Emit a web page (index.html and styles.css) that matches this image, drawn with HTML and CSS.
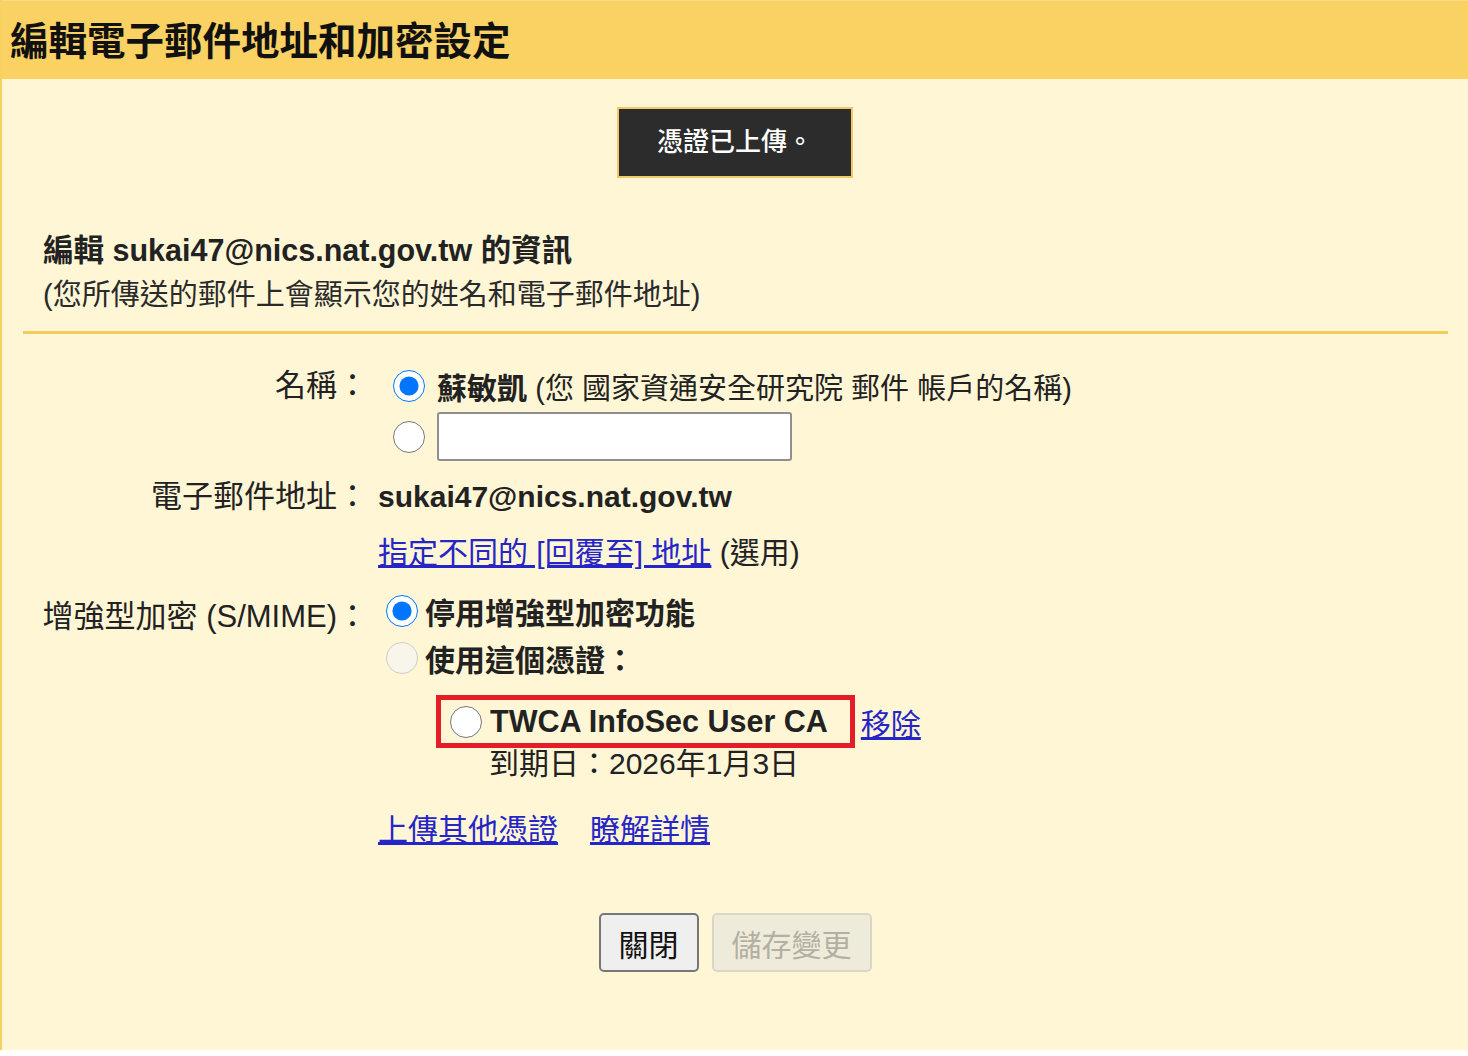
FILE: index.html
```html
<!DOCTYPE html>
<html lang="zh-Hant">
<head>
    <meta charset="UTF-8">
    <meta name="viewport" content="width=device-width, initial-scale=1.0">
    <title>編輯電子郵件地址和加密設定</title>
    <link rel="stylesheet" href="styles.css">
</head>
<body>

    <div class="dialog">
        <!-- Title bar -->
        <div class="dialog-title">編輯電子郵件地址和加密設定</div>

        <div class="dialog-body">
            <div class="toast-row">
                <div class="toast">憑證已上傳。</div>
            </div>

            <div class="intro">
                <h2>編輯 sukai47@nics.nat.gov.tw 的資訊</h2>
                <p>(您所傳送的郵件上會顯示您的姓名和電子郵件地址)</p>
            </div>

            <div class="divider"></div>

            <form class="settings">
                <!-- Name -->
                <div class="label">名稱：</div>
                <div class="value">
                    <div class="name-option">
                        <input type="radio" name="nameChoice" class="radio" checked>
                        <span><b>蘇敏凱</b> <span class="note">(您 國家資通安全研究院 郵件 帳戶的名稱)</span></span>
                    </div>
                    <div class="name-option name-custom">
                        <input type="radio" name="nameChoice" class="radio">
                        <input type="text" class="text-input">
                    </div>
                </div>

                <!-- Email address -->
                <div class="label label-email">電子郵件地址：</div>
                <div class="value">
                    <div class="email">sukai47@nics.nat.gov.tw</div>
                    <div class="reply-to"><a href="#">指定不同的 [回覆至] 地址</a> (選用)</div>
                </div>

                <!-- S/MIME -->
                <div class="label label-smime">增強型加密 (S/MIME)：</div>
                <div class="value">
                    <div class="smime-option">
                        <input type="radio" name="smime" class="radio" checked>
                        <b>停用增強型加密功能</b>
                    </div>
                    <div class="smime-option">
                        <input type="radio" name="smime" class="radio" disabled>
                        <b>使用這個憑證：</b>
                    </div>
                    <div class="cert-row">
                        <div class="cert-box">
                            <input type="radio" name="cert" class="radio">
                            <b>TWCA InfoSec User CA</b>
                        </div>
                        <a href="#" class="remove">移除</a>
                    </div>
                    <div class="expiry">到期日：2026年1月3日</div>
                    <div class="cert-links">
                        <a href="#">上傳其他憑證</a>
                        <a href="#">瞭解詳情</a>
                    </div>
                </div>
            </form>

            <div class="buttons">
                <button type="button" class="btn">關閉</button>
                <button type="button" class="btn" disabled>儲存變更</button>
            </div>
        </div>
    </div>

</body>
</html>
```

FILE: styles.css
```css
body {
    margin: 0;
    padding: 0;
    background-color: #fff;
    font-family: "Liberation Sans", "Noto Sans CJK TC", sans-serif;
    color: #222;
}
.dialog {
    height: 1050px;
    border-left: 2px solid #f9d062;
    background-color: #fff6d6;
    display: flex;
    flex-direction: column;
}
.dialog-title {
    height: 78px;
    border-top: 1px solid #f6dc8a;
    background-color: #fad264;
    font-size: 38.5px;
    font-weight: bold;
    color: #111;
    line-height: 82px;
    padding-left: 8px;
}
.toast-row {
    display: flex;
    justify-content: center;
    margin-top: 28px;
}
.toast {
    width: 232px;
    height: 67px;
    border: 2px solid #f2c76a;
    background-color: #2c2c2c;
    color: #fff;
    font-size: 26px;
    font-weight: 500;
    line-height: 67px;
    text-align: center;
}
.intro {
    padding-left: 41px;
    margin-top: 52px;
}
.intro h2 {
    margin: 0;
    font-size: 30.5px;
    line-height: 40px;
}
.intro p {
    margin: 5px 0 0;
    font-size: 29px;
    line-height: 40px;
    color: #2a2a2a;
}
.divider {
    margin: 16px 20px 0 21px;
    border-top: 3px solid #f6ca5c;
}
.settings {
    display: grid;
    grid-template-columns: 366px 1fr;
    margin-top: 30px;
    font-size: 30px;
}
.label {
    text-align: right;
    line-height: 44px;
    font-size: 31px;
}
.value {
    padding-left: 10px;
}
.radio {
    width: 32px;
    height: 32px;
    margin: 0;
    flex-shrink: 0;
}
.name-option {
    display: flex;
    align-items: center;
    gap: 12px;
    margin-left: 15px;
    height: 44px;
}
.note {
    font-size: 29px;
}
.name-custom {
    height: 49px;
    margin-top: 4px;
}
.text-input {
    width: 351px;
    height: 45px;
    box-sizing: content-box;
    padding: 0;
    border: 2px solid #8f8f8f;
    border-radius: 3px;
    background-color: #fff;
}
.label-email {
    margin-top: 14px;
}
.email {
    margin-top: 14px;
    font-weight: bold;
    line-height: 44px;
}
.reply-to {
    margin-top: 12px;
    line-height: 44px;
}
a {
    color: #2525c8;
}
.label-smime {
    margin-top: 20px;
}
.smime-option {
    display: flex;
    align-items: center;
    gap: 7px;
    margin-left: 8px;
    height: 47px;
}
.smime-option:first-child {
    margin-top: 12px;
}
.cert-row {
    display: flex;
    align-items: center;
    margin: 14px 0 0 58px;
}
.cert-box {
    display: flex;
    align-items: center;
    gap: 8px;
    height: 43px;
    padding: 0 22px 0 9px;
    border: 5px solid #e41d28;
}
.cert-box b {
    font-size: 30.5px;
}
.remove {
    margin-left: 6px;
}
.expiry {
    margin-left: 111px;
    line-height: 32px;
}
.cert-links {
    display: flex;
    gap: 32px;
    margin-top: 32px;
    line-height: 36px;
}
.buttons {
    display: flex;
    justify-content: center;
    gap: 13px;
    margin-top: 65px;
}
.btn {
    height: 59px;
    padding: 0 18px;
    border: 2px solid #777;
    border-radius: 5px;
    background-color: #efefef;
    color: #111;
    font-family: inherit;
    font-size: 30px;
}
.btn:disabled {
    border-color: #dcd7c4;
    background-color: #efebdb;
    color: #b3afa2;
}
```
